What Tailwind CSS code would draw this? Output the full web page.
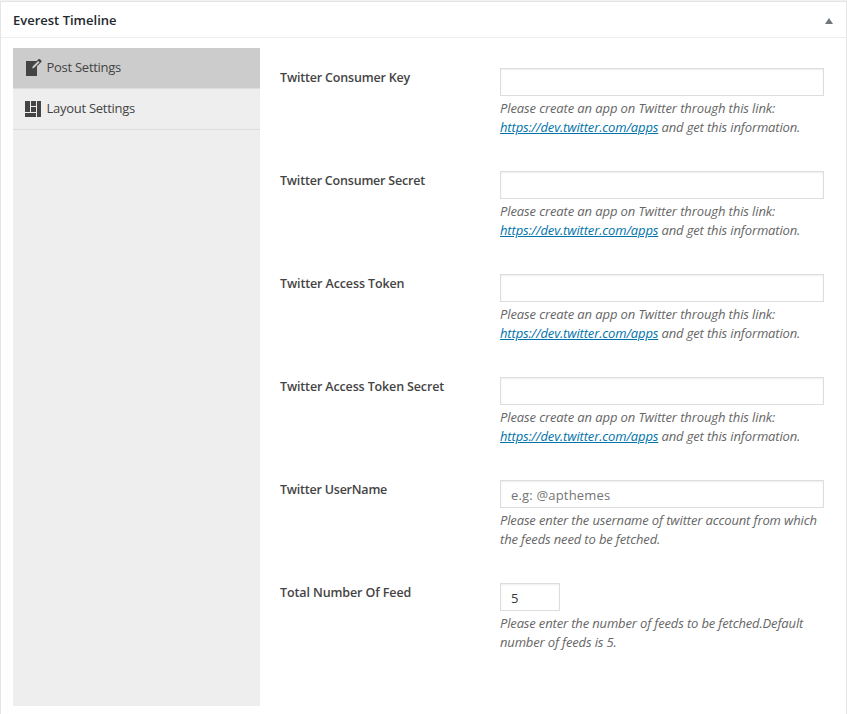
<!DOCTYPE html>
<html lang="en">
<head>
<meta charset="utf-8">
<title>Everest Timeline</title>
<script src="https://cdn.jsdelivr.net/npm/@tailwindcss/browser@4"></script>
</head>
<body class="h-[714px] overflow-hidden bg-[#f1f1f1] pt-px font-['Open_Sans','Noto_Sans',sans-serif] text-[13px] text-[#444]">
<section class="h-[713px] w-[847px] border border-b-0 border-[#e5e5e5] bg-white">
  <header class="flex h-9 items-center justify-between border-b border-[#eee] pr-[13px] pl-3">
    <h2 class="text-[13px] leading-[18px] font-semibold text-[#23282d]">Everest Timeline</h2>
    <svg class="mt-[3px] h-[6px] w-[8px]" viewBox="0 0 8 6" fill="#72777c"><path d="M4 0l4 6H0z"/></svg>
  </header>
  <div class="flex pt-[10px] pl-3">
    <nav class="h-[658px] w-[247px] bg-[#eee] tracking-[-0.27px] text-[#444]">
      <a class="flex h-[41px] items-center border-b border-[#ddd] bg-[#ccc] pl-[10px]">
        <svg class="h-5 w-5" viewBox="0 0 20 20" fill="#444"><path d="M16.89 1.2l1.41 1.41c.39.39.39 1.02 0 1.41L14 8.33V18H3V3h10.67l1.8-1.8c.4-.39 1.03-.4 1.42 0zm-5.66 8.48l5.37-5.36-1.42-1.42-5.36 5.37-.71 2.12z"/></svg>
        <span class="ml-[3.5px]">Post Settings</span>
      </a>
      <a class="flex h-[41px] items-center border-b border-[#ddd] pl-[10px]">
        <svg class="h-5 w-5" viewBox="0 0 20 20" fill="#444"><path d="M2 2h5v11H2V2zm6 0h5v5H8V2zm6 0h4v16h-4V2zM8 8h5v5H8V8zm-6 6h11v4H2v-4z"/></svg>
        <span class="ml-[3.5px]">Layout Settings</span>
      </a>
    </nav>
    <div class="pt-5 pl-5">
      <div class="flex h-[103px]">
        <label class="w-[220px] text-[12.5px] leading-[19px] font-semibold tracking-[-0.18px]">Twitter Consumer Key</label>
        <div class="w-[324px]">
          <input class="block h-7 w-full border border-[#ddd] bg-white px-[10px] shadow-[inset_0_1px_2px_rgba(0,0,0,0.07)]">
          <p class="mt-[3px] leading-[19px] tracking-[-0.14px] whitespace-nowrap text-[#666] italic"><span class="tracking-[-0.11px]">Please create an app on Twitter through this link:</span><br><a class="text-[#0073aa] underline">https://dev.twitter.com/apps</a> and get this information.</p>
        </div>
      </div>
      <div class="flex h-[103px]">
        <label class="w-[220px] text-[12.5px] leading-[19px] font-semibold tracking-[-0.2px]">Twitter Consumer Secret</label>
        <div class="w-[324px]">
          <input class="block h-7 w-full border border-[#ddd] bg-white px-[10px] shadow-[inset_0_1px_2px_rgba(0,0,0,0.07)]">
          <p class="mt-[3px] leading-[19px] tracking-[-0.14px] whitespace-nowrap text-[#666] italic"><span class="tracking-[-0.11px]">Please create an app on Twitter through this link:</span><br><a class="text-[#0073aa] underline">https://dev.twitter.com/apps</a> and get this information.</p>
        </div>
      </div>
      <div class="flex h-[103px]">
        <label class="w-[220px] text-[12.5px] leading-[19px] font-semibold tracking-[-0.12px]">Twitter Access Token</label>
        <div class="w-[324px]">
          <input class="block h-7 w-full border border-[#ddd] bg-white px-[10px] shadow-[inset_0_1px_2px_rgba(0,0,0,0.07)]">
          <p class="mt-[3px] leading-[19px] tracking-[-0.14px] whitespace-nowrap text-[#666] italic"><span class="tracking-[-0.11px]">Please create an app on Twitter through this link:</span><br><a class="text-[#0073aa] underline">https://dev.twitter.com/apps</a> and get this information.</p>
        </div>
      </div>
      <div class="flex h-[103px]">
        <label class="w-[220px] text-[12.5px] leading-[19px] font-semibold tracking-[-0.14px]">Twitter Access Token Secret</label>
        <div class="w-[324px]">
          <input class="block h-7 w-full border border-[#ddd] bg-white px-[10px] shadow-[inset_0_1px_2px_rgba(0,0,0,0.07)]">
          <p class="mt-[3px] leading-[19px] tracking-[-0.14px] whitespace-nowrap text-[#666] italic"><span class="tracking-[-0.11px]">Please create an app on Twitter through this link:</span><br><a class="text-[#0073aa] underline">https://dev.twitter.com/apps</a> and get this information.</p>
        </div>
      </div>
      <div class="flex h-[103px]">
        <label class="w-[220px] text-[12.5px] leading-[19px] font-semibold tracking-[-0.22px]">Twitter UserName</label>
        <div class="w-[324px]">
          <input class="block h-7 w-full border border-[#ddd] bg-white px-[10px] pt-[2px] tracking-[0.18px] shadow-[inset_0_1px_2px_rgba(0,0,0,0.07)] placeholder:text-[#757575]" placeholder="e.g: @apthemes">
          <p class="mt-[3px] leading-[19px] tracking-[-0.14px] whitespace-nowrap text-[#666] italic">Please enter the username of twitter account from which<br>the feeds need to be fetched.</p>
        </div>
      </div>
      <div class="flex h-[103px]">
        <label class="w-[220px] text-[12.5px] leading-[19px] font-semibold tracking-[-0.11px]">Total Number Of Feed</label>
        <div class="w-[324px]">
          <input class="block h-7 w-[60px] border border-[#ddd] bg-white px-[10px] pt-[2px] text-[#32373c] shadow-[inset_0_1px_2px_rgba(0,0,0,0.07)]" value="5">
          <p class="mt-[3px] leading-[19px] tracking-[-0.15px] whitespace-nowrap text-[#666] italic">Please enter the number of feeds to be fetched.Default<br>number of feeds is 5.</p>
        </div>
      </div>
    </div>
  </div>
</section>
</body>
</html>
